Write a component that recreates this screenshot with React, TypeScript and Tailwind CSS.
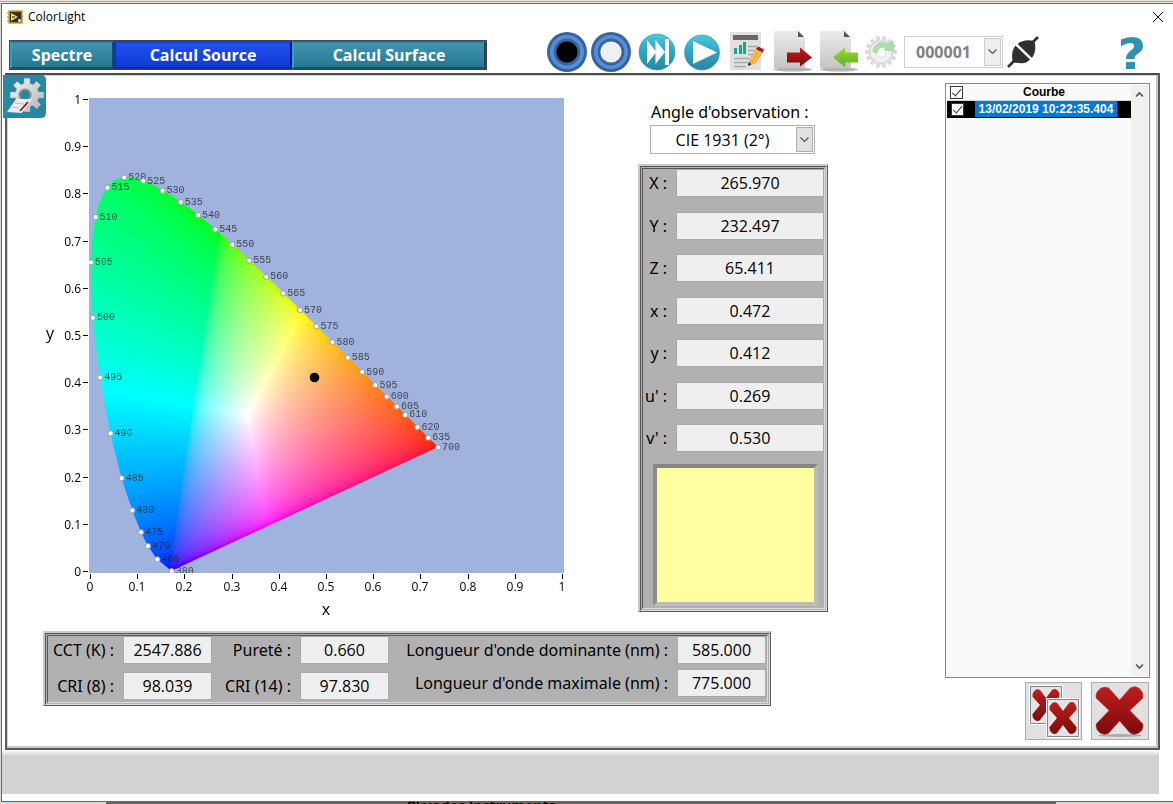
import { useEffect, useRef, useState } from 'react'
import clsx from 'clsx'

const FONT = "font-['Open_Sans','Noto_Sans',sans-serif]"
const LABEL = "font-['Noto_Sans','Open_Sans',sans-serif] text-base leading-6 whitespace-nowrap"

// wavelength (nm), x, y of the CIE 1931 spectral locus
const LOCUS = [
  [380, 0.1741, 0.005], [460, 0.144, 0.0297], [470, 0.1241, 0.0578], [475, 0.1096, 0.0868],
  [480, 0.0913, 0.1327], [485, 0.0687, 0.2007], [490, 0.0454, 0.295], [495, 0.0235, 0.4127],
  [500, 0.0082, 0.5384], [505, 0.0039, 0.6548], [510, 0.0139, 0.7502], [515, 0.0389, 0.812],
  [520, 0.0743, 0.8338], [525, 0.1142, 0.8262], [530, 0.1547, 0.8059], [535, 0.1929, 0.7816],
  [540, 0.2296, 0.7543], [545, 0.2658, 0.7243], [550, 0.3016, 0.6923], [555, 0.3373, 0.6589],
  [560, 0.3731, 0.6245], [565, 0.4087, 0.5896], [570, 0.4441, 0.5547], [575, 0.4788, 0.5202],
  [580, 0.5125, 0.4866], [585, 0.5448, 0.4544], [590, 0.5752, 0.4242], [595, 0.6029, 0.3965],
  [600, 0.627, 0.3725], [605, 0.6482, 0.3514], [610, 0.6658, 0.334], [620, 0.6915, 0.3083],
  [635, 0.714, 0.2859], [700, 0.7347, 0.2653],
]

const TICKS = [0, 0.1, 0.2, 0.3, 0.4, 0.5, 0.6, 0.7, 0.8, 0.9, 1]

const PLOT = 475
const AXIS = 472
const LEFT = 46
const TOP = 8

const COLORIMETRY = [
  { id: 'X', label: 'X :', value: '265.970' },
  { id: 'Y', label: 'Y :', value: '232.497' },
  { id: 'Z', label: 'Z :', value: '65.411' },
  { id: 'cx', label: 'x :', value: '0.472' },
  { id: 'cy', label: 'y :', value: '0.412' },
  { id: 'u', label: "u' :", value: '0.269' },
  { id: 'v', label: "v' :", value: '0.530' },
]

// x, y -> display colour, CIE RGB primaries, brightest channel at full level
const chromaToRgb = (x: number, y: number) => {
  const z = 1 - x - y
  const r = 2.3706743 * x - 0.9000405 * y - 0.4706338 * z
  const g = -0.513885 * x + 1.4253036 * y + 0.0885814 * z
  const b = 0.0052982 * x - 0.0146949 * y + 1.0093968 * z
  const max = Math.max(r, g, b)
  return [r, g, b].map((c) => 255 * Math.pow(Math.max(c, 0) / max, 1 / 2.2))
}

const GamutFill = () => {
  const ref = useRef<HTMLCanvasElement>(null)

  useEffect(() => {
    const ctx = ref.current?.getContext('2d')
    if (!ctx) return
    ctx.clearRect(0, 0, PLOT, PLOT)
    const image = ctx.createImageData(PLOT, PLOT)
    for (let j = 0; j < PLOT; j++) {
      for (let i = 0; i < PLOT; i++) {
        const [r, g, b] = chromaToRgb(i / PLOT, 1 - j / PLOT)
        image.data.set([r, g, b, 255], (j * PLOT + i) * 4)
      }
    }
    ctx.putImageData(image, 0, 0)

    // keep only what lies inside the locus, rounded through the points
    const pts = LOCUS.map(([, x, y]) => [x * PLOT, (1 - y) * PLOT])
    ctx.globalCompositeOperation = 'destination-in'
    ctx.beginPath()
    ctx.moveTo(pts[0][0], pts[0][1])
    for (let k = 0; k < pts.length - 1; k++) {
      const p0 = pts[Math.max(k - 1, 0)]
      const p1 = pts[k]
      const p2 = pts[k + 1]
      const p3 = pts[Math.min(k + 2, pts.length - 1)]
      ctx.bezierCurveTo(
        p1[0] + (p2[0] - p0[0]) / 6, p1[1] + (p2[1] - p0[1]) / 6,
        p2[0] - (p3[0] - p1[0]) / 6, p2[1] - (p3[1] - p1[1]) / 6,
        p2[0], p2[1],
      )
    }
    ctx.closePath()
    ctx.fill()
    ctx.globalCompositeOperation = 'source-over'
  }, [])

  return <canvas ref={ref} width={PLOT} height={PLOT} className="absolute left-[46px] top-2 bg-[#a0b2de]" />
}

const ChromaticityChart = () => (
  <div className="relative w-[532px] h-[530px] shrink-0">
    <GamutFill />
    <svg width="532" height="530" className={clsx('absolute inset-0', FONT)} role="img" aria-label="Diagramme de chromaticité">
      {TICKS.map((t) => {
        const px = LEFT + 1 + Math.round(t * AXIS)
        const py = TOP + 1 + Math.round((1 - t) * AXIS)
        return (
          <g key={t} fontSize="12">
            <rect x={LEFT - 6} y={py} width="5" height="1" />
            <text x={LEFT - 8} y={py + 5} textAnchor="end">{t}</text>
            <rect x={px} y={TOP + PLOT + 1} width="1" height="5" />
            <text x={px} y={TOP + PLOT + 18} textAnchor="middle">{t}</text>
          </g>
        )
      })}
      <text x="3" y="249" fontSize="16">y</text>
      <text x="283" y="525" fontSize="16" textAnchor="middle">x</text>

      <svg x={LEFT} y={TOP} width={PLOT} height={PLOT}>
        {LOCUS.map(([nm, x, y]) => (
          <g key={nm}>
            <text
              x={x * PLOT + 4} y={(1 - y) * PLOT + 3} fontSize="10" fill="#222" fillOpacity="0.75"
              className="font-['Liberation_Mono','Courier_New',monospace]"
            >
              {nm}
            </text>
            <circle cx={x * PLOT} cy={(1 - y) * PLOT + 0.5} r="2.6" fill="#fff" stroke="#999" />
          </g>
        ))}
        <circle cx="225.5" cy="279.5" r="4.8" />
      </svg>
    </svg>
  </div>
)

const gearPath = (cx: number, cy: number, teeth: number, outer: number, inner: number) => {
  const step = (Math.PI * 2) / teeth
  let d = ''
  for (let i = 0; i < teeth; i++) {
    const a = i * step
    const corners = [[-0.3, inner], [-0.2, outer], [0.2, outer], [0.3, inner]]
    corners.forEach(([k, r]) => {
      d += `${d ? 'L' : 'M'}${(cx + r * Math.cos(a + k * step)).toFixed(2)} ${(cy + r * Math.sin(a + k * step)).toFixed(2)}`
    })
  }
  return d + 'Z'
}

const RingIcon = ({ fill }: { fill: string }) => (
  <svg width="40" height="40" viewBox="0 0 40 40">
    <circle cx="20" cy="20" r="20" fill="#38649b" />
    <circle cx="20" cy="20" r="15.2" fill="none" stroke="#548fdc" strokeWidth="3.6" />
    <circle cx="20" cy="20" r="10.6" fill={fill} />
  </svg>
)

const Defs = () => (
  <svg width="0" height="0" className="absolute" aria-hidden="true">
    <defs>
      <linearGradient id="teal" x1="0" y1="0" x2="0" y2="1">
        <stop offset="0" stopColor="#4cc9de" />
        <stop offset="0.4" stopColor="#35a9c4" />
        <stop offset="1" stopColor="#2a86a0" />
      </linearGradient>
      <linearGradient id="paper" x1="0" y1="0" x2="0" y2="1">
        <stop offset="0" stopColor="#ececec" />
        <stop offset="1" stopColor="#c4c4c4" />
      </linearGradient>
      <linearGradient id="red" x1="0" y1="0" x2="0" y2="1">
        <stop offset="0" stopColor="#c01d1d" />
        <stop offset="1" stopColor="#7c0a0a" />
      </linearGradient>
      <linearGradient id="green" x1="0" y1="0" x2="0" y2="1">
        <stop offset="0" stopColor="#95d92e" />
        <stop offset="1" stopColor="#62b02b" />
      </linearGradient>
      <linearGradient id="steel" x1="0" y1="0" x2="1" y2="1">
        <stop offset="0" stopColor="#f4f4f4" />
        <stop offset="1" stopColor="#b4b4b4" />
      </linearGradient>
    </defs>
  </svg>
)

const SkipIcon = () => (
  <svg width="38" height="38" viewBox="0 0 38 38">
    <circle cx="19" cy="19" r="18" fill="url(#teal)" stroke="#2d9bb5" strokeWidth="0.6" />
    <path d="M9 7L17.5 18V7L27 19L17.5 31V20L9 31ZM27 6H31V32H27Z" fill="#fff" />
  </svg>
)

const PlayIcon = () => (
  <svg width="38" height="38" viewBox="0 0 38 38">
    <circle cx="19" cy="19.5" r="17.5" fill="url(#teal)" stroke="#2d9bb5" strokeWidth="0.6" />
    <path d="M10 8L34 19.5L10 31Z" fill="#fff" />
  </svg>
)

const ReportIcon = () => (
  <svg width="38" height="40" viewBox="0 0 38 40">
    <rect x="2" y="1" width="31" height="38" fill="#e0e0e0" />
    <rect x="5" y="4" width="25" height="5" fill="#6c6462" />
    <path d="M6 17h3v6H6zM11 14h3v9h-3zM15 11h3v12h-3z" fill="#18a689" />
    <path d="M20 15.5h9M20 19.5h9M20 23.5h6M6 27.5h15M6 31.5h14M6 35.5h12" stroke="#9cabb4" strokeWidth="1.5" />
    <path d="M20 35L21.5 28L28.5 17L35 21L28 32Z" fill="#f3ac35" />
    <path d="M23 29L29.5 18.5M26 31.5L32.5 20.5" stroke="#fbd070" strokeWidth="1" />
    <path d="M28 18L30 15.5L36 18.500L34.5 21.5Z" fill="#a81420" />
    <path d="M20 35L20.800 31L23.5 33.500Z" fill="#222" />
  </svg>
)

const FileIcon = ({ out }: { out?: boolean }) => (
  <svg width="39" height="42" viewBox="0 0 39 42">
    <ellipse cx="20" cy="39.5" rx="19" ry="2" fill="#b5b5b5" />
    <path d="M1 1H25L32 7.5V38H1Z" fill="url(#paper)" />
    <path d="M25 1L31 7H25Z" fill="#555" />
    {out
      ? <path d="M14 22.5H27V17.5L39 27.5L27 36.5V32.5H14Z" fill="url(#red)" />
      : <path d="M39 22.5H26V17.5L14 27.5L26 37V32.5H39Z" fill="url(#green)" />}
  </svg>
)

const RefreshGearIcon = () => (
  <svg width="32" height="34" viewBox="0 0 32 34">
    <path d={gearPath(16, 17, 14, 15.5, 12)} fill="#dcdcdf" stroke="#c9c9cc" strokeWidth="0.6" />
    <circle cx="16" cy="17" r="10.5" fill="#f0f0f1" />
    <circle cx="16" cy="17" r="5.2" fill="#fff" stroke="#cfcfcf" strokeWidth="0.6" />
    <path d="M8 17C8 10 15 5 23 9L28 6L29 16L19 15L21 12.5C16 11 13 13 12 18Z" fill="#a6e3a4" stroke="#86cf86" strokeWidth="0.5" />
  </svg>
)

const PlugIcon = () => (
  <svg width="33" height="34" viewBox="0 0 33 34" fill="#303030">
    <path d="M1 32L9 24M24 9L31 2" stroke="#303030" strokeWidth="2.6" />
    <path d="M8.5 10.5L23 24.5C19.5 28.5 15.5 28.5 12 28L6 27.5C4.500 22 4.5 15.5 8.5 10.5Z" />
    <path d="M10.5 9C15 5 21 4.5 27.5 6C29 12 28.5 18 25 23Z" />
  </svg>
)

const SettingsIcon = () => (
  <svg width="43" height="43" viewBox="0 0 43 43">
    <path d="M0 0H38Q43 0 43 5V38Q43 43 38 43H0Z" fill="#2788a2" />
    <path d={gearPath(24, 20, 8, 16.5, 11.5)} fill="url(#steel)" stroke="#d8d8d8" strokeWidth="0.8" />
    <circle cx="22" cy="20" r="5.5" fill="#2788a2" stroke="#8a8a8a" strokeWidth="2" />
    <path d="M13 24L29 24L19 38L4 37Z" fill="#ececec" />
    <path d="M12 28L21 29M9 32L16 33" stroke="#bdbdbd" />
    <path d="M17 36L25 27" stroke="#8d1616" strokeWidth="1.8" />
  </svg>
)

const CROSS = 'M5 2Q9 0 13 2L23.5 14L34 2Q39 -1 43 2Q48 6 47 12L34 24.5L47 38Q48 44 43 47Q38 50 34 47L23.5 35L13 47Q9 50 4 47Q-1 43 0 38L13 24.5L0 12Q-1 6 5 2Z'

const DeleteIcon = () => (
  <svg width="50" height="53" viewBox="-1 -1 50 53">
    <ellipse cx="24" cy="49.5" rx="22" ry="1.5" fill="#aaa" />
    <path d={CROSS} fill="url(#red)" stroke="#c85a5a" strokeWidth="0.5" />
  </svg>
)

const DeleteAllIcon = () => (
  <svg width="53" height="54" viewBox="0 0 53 54">
    {[[2, 1, 34, 40], [19, 14, 34, 40]].map(([x, y, w, h]) => (
      <g key={x}>
        <rect x={x} y={y} width={w} height={h} fill="#fff" />
        <rect x={x + 1.5} y={y + 1.5} width={w - 3} height={h - 3} fill="#e4e4e4" stroke="#888" />
        <svg x={x + 3} y={y + 3} width="28" height="34" viewBox="-1 -1 49 51" preserveAspectRatio="none">
          <path d={CROSS} fill="url(#red)" />
        </svg>
      </g>
    ))}
  </svg>
)

const Chevron = () => (
  <svg width="9" height="6" viewBox="0 0 9 6" fill="none" stroke="#555" strokeWidth="1.2">
    <path d="M0.5 0.5L4.5 4.5L8.5 0.5" />
  </svg>
)

const Field = ({ id, value, className }: { id: string, value: string, className?: string }) => (
  <input
    id={id}
    readOnly
    value={value}
    className={clsx('h-7 min-w-0 border border-[#a8a8ae] bg-[#efefef] text-center text-base text-black outline-none', className)}
  />
)

const Sunken = ({ children, className }: { children: React.ReactNode, className?: string }) => (
  <div className="border-t-2 border-l-2 border-r border-b border-t-[#c9c9c9] border-l-[#c9c9c9] border-r-[#5a5a5a] border-b-[#5a5a5a]">
    <div className={clsx('border-[3px] border-double border-t-[#555] border-l-[#555] border-r-[#dcdcdc] border-b-[#dcdcdc] bg-[#b1b1b1]', className)}>
      {children}
    </div>
  </div>
)

const TABS = [
  { name: 'Spectre', width: 'w-[104px]' },
  { name: 'Calcul Source', width: 'w-[178px]' },
  { name: 'Calcul Surface', width: 'w-[194px]' },
]

const Tabs = () => {
  const [active, setActive] = useState('Calcul Source')
  return (
    <div role="tablist" className="flex border border-[#444] bg-[#444]">
      {TABS.map((tab) => (
        <button
          key={tab.name}
          role="tab"
          aria-selected={active === tab.name}
          onClick={() => setActive(tab.name)}
          className={clsx(
            'h-7 border-2 text-base leading-6 font-bold text-white',
            tab.width,
            active === tab.name
              ? 'border-t-[#1a3fd6] border-l-[#1030c4] border-r-[#06188a] border-b-[#0c28a8] bg-linear-to-b from-[#2350ec] to-[#0e39d4]'
              : 'border-t-[#2b7a93] border-l-[#3c9dba] border-r-[#15495a] border-b-[#175266] bg-linear-to-b from-[#4095b1] to-[#277790]',
          )}
        >
          {tab.name}
        </button>
      ))}
    </div>
  )
}

const Toolbar = () => (
  <div className="h-[43px] pl-[7px] pr-[29px] flex items-center">
    <div className="pt-[7px]"><Tabs /></div>
    <div className="ml-[60px] flex items-center gap-[7px]">
      <div className="flex gap-1">
        <button aria-label="Noir"><RingIcon fill="#000" /></button>
        <button aria-label="Blanc"><RingIcon fill="#f0f0f0" /></button>
      </div>
      <button aria-label="Mesure continue"><SkipIcon /></button>
      <button aria-label="Mesure"><PlayIcon /></button>
      <button aria-label="Rapport" className="pb-[2px]"><ReportIcon /></button>
      <button aria-label="Exporter" className="pb-[2px]"><FileIcon out /></button>
      <button aria-label="Importer" className="pb-[2px]"><FileIcon /></button>
      <button aria-label="Actualiser"><RefreshGearIcon /></button>
      <div className="flex items-center gap-1">
        <div className="relative">
          <select
            aria-label="Appareil"
            className="w-[99px] h-8 pr-5 appearance-none border border-[#d0d0d0] bg-white text-base leading-6 font-bold text-[#808080] [text-align-last:center]"
          >
            <option>000001</option>
          </select>
          <span className="pointer-events-none absolute right-[2px] top-[2px] bottom-[2px] w-[17px] flex items-center justify-center border border-[#ccc] bg-[#eee]"><Chevron /></span>
        </div>
        <button aria-label="Connexion"><PlugIcon /></button>
      </div>
    </div>
    <button aria-label="Aide" className="ml-auto pt-[2px]">
      <svg width="24" height="32" viewBox="0 0 24 32" fill="#2f93af">
        <path d="M1 2.5Q6 0 12 0Q23 0 23 9Q23 13 19 16L16 18Q14.5 19.5 14.5 22H6Q6 17.5 9 15L12 12.5Q14 11 14 9Q14 6 10.5 6Q6 6 1 9.5ZM6 25H15V32H6Z" />
      </svg>
    </button>
  </div>
)

const ColorimetryPanel = () => (
  <div className="w-[190px] shrink-0">
    <div className="pl-3 pr-[13px]">
      <label htmlFor="angle" className={clsx('block h-6 pl-px', LABEL)}>Angle d'observation :</label>
      <div className="relative mt-[1px]">
        <select
          id="angle"
          className="w-full h-[29px] pr-5 appearance-none border border-[#adadb3] bg-white text-base leading-6 [text-align-last:center]"
        >
          <option>CIE 1931 (2°)</option>
          <option>CIE 1964 (10°)</option>
        </select>
        <span className="pointer-events-none absolute right-[2px] top-[2px] bottom-[2px] w-[17px] flex items-center justify-center border border-[#adadad] bg-[#e1e1e1]"><Chevron /></span>
      </div>
    </div>
    <div className="mt-[10px]">
      <Sunken className="pb-[2px]">
        <div className="h-[283px] flex flex-col justify-between">
          {COLORIMETRY.map((item) => (
            <div key={item.id} className="flex items-center">
              <label htmlFor={item.id} className={clsx('w-[33px] pr-[9px] flex justify-end', LABEL)}>{item.label}</label>
              <Field id={item.id} value={item.value} className="flex-1" />
            </div>
          ))}
        </div>
        <div className="mt-3 ml-[10px] mr-[6px] h-[142px] border-[4px] border-t-[#868686] border-l-[#8c8c8c] border-r-[#bcbcbc] border-b-[#bcbcbc] bg-[#ffffa0]" />
      </Sunken>
    </div>
  </div>
)

const Pair = ({ id, label, value }: { id: string, label: string, value: string }) => (
  <div className="flex items-center justify-end">
    <label htmlFor={id} className={clsx('pr-[9px]', LABEL)}>{label}</label>
    <Field id={id} value={value} className="w-[89px]" />
  </div>
)

const SourceSummary = () => (
  <div className="w-[728px]">
    <Sunken className="flex items-start pr-px pb-[2px]">
      <div className="w-[164px] flex flex-col gap-2">
        <Pair id="cct" label="CCT (K) :" value="2547.886" />
        <Pair id="cri8" label="CRI (8) :" value="98.039" />
      </div>
      <div className="w-[177px] flex flex-col gap-2">
        <Pair id="purete" label="Pureté :" value="0.660" />
        <Pair id="cri14" label="CRI (14) :" value="97.830" />
      </div>
      <div className="flex-1 flex flex-col gap-[5px]">
        <Pair id="dominante" label="Longueur d'onde dominante (nm) :" value="585.000" />
        <Pair id="maximale" label="Longueur d'onde maximale (nm) :" value="775.000" />
      </div>
    </Sunken>
  </div>
)

const CHECKBOX = "block w-[13px] h-[13px] appearance-none border border-[#333] bg-white relative checked:after:absolute checked:after:left-[3px] checked:after:top-0 checked:after:w-[5px] checked:after:h-[9px] checked:after:border-r checked:after:border-b checked:after:border-[#333] checked:after:rotate-40"

const CurveList = () => (
  <div className="w-[205px] flex-1 flex border border-[#828790] bg-[#fafafa] p-px">
    <div className="flex-1">
      <table className="w-full font-['Liberation_Sans',Arial,sans-serif] text-[12px] leading-4 font-bold">
        <thead>
          <tr className="h-[15px] border-b border-[#d5d5d5] leading-[15px]">
            <th className="w-7 pl-[3px]"><input type="checkbox" defaultChecked aria-label="Toutes les courbes" className={CHECKBOX} /></th>
            <th className="pr-[18px] text-center">Courbe</th>
          </tr>
        </thead>
        <tbody>
          <tr className="h-[17px] bg-black text-white">
            <td className="pl-1"><input type="checkbox" defaultChecked aria-label="13/02/2019 10:22:35.404" className={CHECKBOX} /></td>
            <td className="whitespace-nowrap"><span className="block w-[142px] bg-[#0078d7] text-center">13/02/2019 10:22:35.404</span></td>
          </tr>
        </tbody>
      </table>
    </div>
    <div className="w-[17px] py-[6px] flex flex-col items-center justify-between bg-[#f0f0f0]">
      <svg width="9" height="7" viewBox="0 0 9 7" fill="none" stroke="#505050" strokeWidth="1.6"><path d="M1 5.5L4.5 2L8 5.5" /></svg>
      <svg width="9" height="7" viewBox="0 0 9 7" fill="none" stroke="#505050" strokeWidth="1.6"><path d="M1 1.5L4.5 5L8 1.5" /></svg>
    </div>
  </div>
)

const App = () => {
  return (
    <div className={clsx('min-h-screen flex flex-col bg-[#d9d9d9] text-black', FONT)}>
      <Defs />
      <div className="h-[3px] border-y border-t-[#e6e6e6] border-b-[#e6e6e6] bg-[#a8a8a8]" />

      <div className="ml-px flex-1 flex flex-col border-t border-l border-b border-[#1a7bc4] bg-white">
        <header className="h-[26px] pl-[5px] pr-[10px] flex items-center">
          <svg width="16" height="16" viewBox="0 0 16 16">
            <path d="M0 4H2M0 8H2M0 12H2M14 8H16" stroke="#4a86b8" />
            <rect x="2" y="2" width="13" height="12" fill="#333" stroke="#d9a514" strokeWidth="1.5" />
            <path d="M4 4L11 8L4 12Z" fill="#f6d26a" />
            <path d="M5 8H8M10 12H14" stroke="#222" />
            <circle cx="12.5" cy="11.5" r="1.5" fill="#eee" />
          </svg>
          <h1 className="ml-[5px] text-[12px] leading-4">ColorLight</h1>
          <button aria-label="Fermer" className="ml-auto">
            <svg width="10" height="10" viewBox="0 0 10 10" stroke="#000"><path d="M0 0L10 10M10 0L0 10" /></svg>
          </button>
        </header>

        <Toolbar />

        <main className="relative ml-[3px] mr-[13px] flex-1 flex justify-between border-2 border-t-[#4c4c4c] border-l-[#5a5a5a] border-r-[#5a5a5a] border-b-[#5a5a5a] shadow-[inset_-2px_-2px_0_#c9c9c9,inset_1px_1px_0_#d4d4d4]">
          <button aria-label="Réglages" className="absolute -left-[4px] top-0"><SettingsIcon /></button>

          <div className="pl-[36px] pt-[15px]">
            <div className="flex">
              <ChromaticityChart />
              <div className="ml-[63px] pt-[10px]"><ColorimetryPanel /></div>
            </div>
            <div className="mt-[11px]"><SourceSummary /></div>
          </div>

          <div className="pt-2 pr-2 pb-2 flex flex-col">
            <CurveList />
            <div className="mt-1 mr-px flex justify-end gap-[9px]">
              <button aria-label="Supprimer toutes les courbes" className="w-[57px] h-[58px] flex items-center justify-center border border-[#adadad] bg-[#e1e1e1]"><DeleteAllIcon /></button>
              <button aria-label="Supprimer la courbe" className="w-[58px] h-[58px] flex items-center justify-center border border-[#adadad] bg-[#e1e1e1]"><DeleteIcon /></button>
            </div>
          </div>
        </main>

        <footer className="mr-[14px] mb-[7px] h-11 bg-linear-to-b from-white to-[#d2d2d2] to-[6px]" />
      </div>

      <div className="h-[2px] pl-[106px] pr-[117px] overflow-hidden">
        <p className="h-[2px] pl-[301px] bg-[#6a6464] text-[14px] leading-[7px] font-bold">Pleiades Instruments</p>
      </div>
    </div>
  )
}

export default App
